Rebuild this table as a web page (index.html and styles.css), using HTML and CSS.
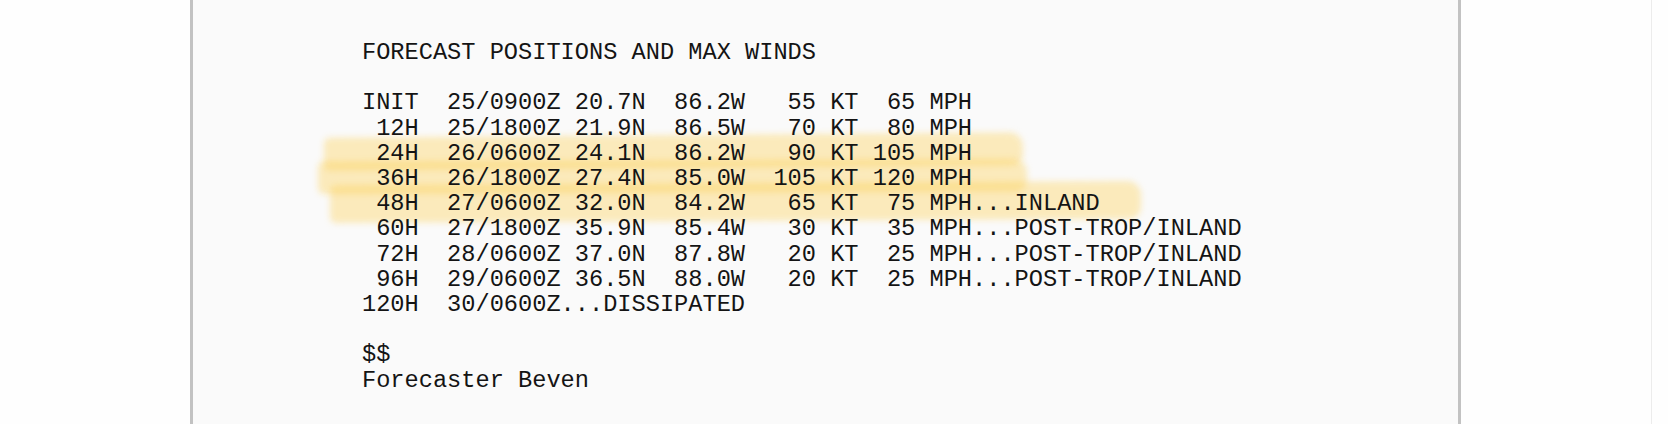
FILE: index.html
```html
<!DOCTYPE html>
<html>
<head>
<meta charset="utf-8">
<link rel="stylesheet" href="styles.css">
</head>
<body>
<div class="viewport">
  <div class="main">
    <div class="sheet">
      <div class="mark mark-1"></div>
      <div class="mark mark-2"></div>
      <div class="mark mark-3"></div>
<pre class="bulletin">FORECAST POSITIONS AND MAX WINDS

INIT  25/0900Z 20.7N  86.2W   55 KT  65 MPH
 12H  25/1800Z 21.9N  86.5W   70 KT  80 MPH
 24H  26/0600Z 24.1N  86.2W   90 KT 105 MPH
 36H  26/1800Z 27.4N  85.0W  105 KT 120 MPH
 48H  27/0600Z 32.0N  84.2W   65 KT  75 MPH...INLAND
 60H  27/1800Z 35.9N  85.4W   30 KT  35 MPH...POST-TROP/INLAND
 72H  28/0600Z 37.0N  87.8W   20 KT  25 MPH...POST-TROP/INLAND
 96H  29/0600Z 36.5N  88.0W   20 KT  25 MPH...POST-TROP/INLAND
120H  30/0600Z...DISSIPATED

$$
Forecaster Beven</pre>
    </div>
  </div>
  <div class="scroll-track"></div>
</div>
</body>
</html>
```

FILE: styles.css
```css
html, body {
  margin: 0;
  padding: 0;
  height: 100%;
  background: #fefefe;
  overflow: hidden;
}

.viewport {
  display: flex;
  height: 100%;
}

.main {
  flex: 1;
  display: flex;
  justify-content: center;
}

.scroll-track {
  width: 16px;
  border-left: 1px solid #ececec;
  background: #fefefe;
}

.sheet {
  position: relative;
  width: 1265px;
  min-height: 100%;
  box-sizing: content-box;
  background: #fafafa;
  border-left: 3px solid #c2c2c2;
  border-right: 3px solid #c2c2c2;
}

.bulletin {
  position: relative;
  z-index: 1;
  margin: 0;
  padding: 40px 0 0 169px;
  font-family: "Liberation Mono", "Courier New", monospace;
  font-size: 23.65px;
  line-height: 25.2px;
  color: #141414;
  white-space: pre;
}

.mark {
  position: absolute;
  z-index: 0;
  background: rgba(253, 204, 76, 0.36);
  border-radius: 6px 14px 12px 6px;
  filter: blur(3px);
}

.mark-1 {
  left: 131px;
  top: 135px;
  width: 699px;
  height: 33px;
  transform: rotate(-0.45deg);
}

.mark-2 {
  left: 125px;
  top: 160px;
  width: 709px;
  height: 33px;
  transform: rotate(-0.2deg);
}

.mark-3 {
  left: 137px;
  top: 183px;
  width: 811px;
  height: 38px;
  transform: rotate(-0.3deg);
}
```
